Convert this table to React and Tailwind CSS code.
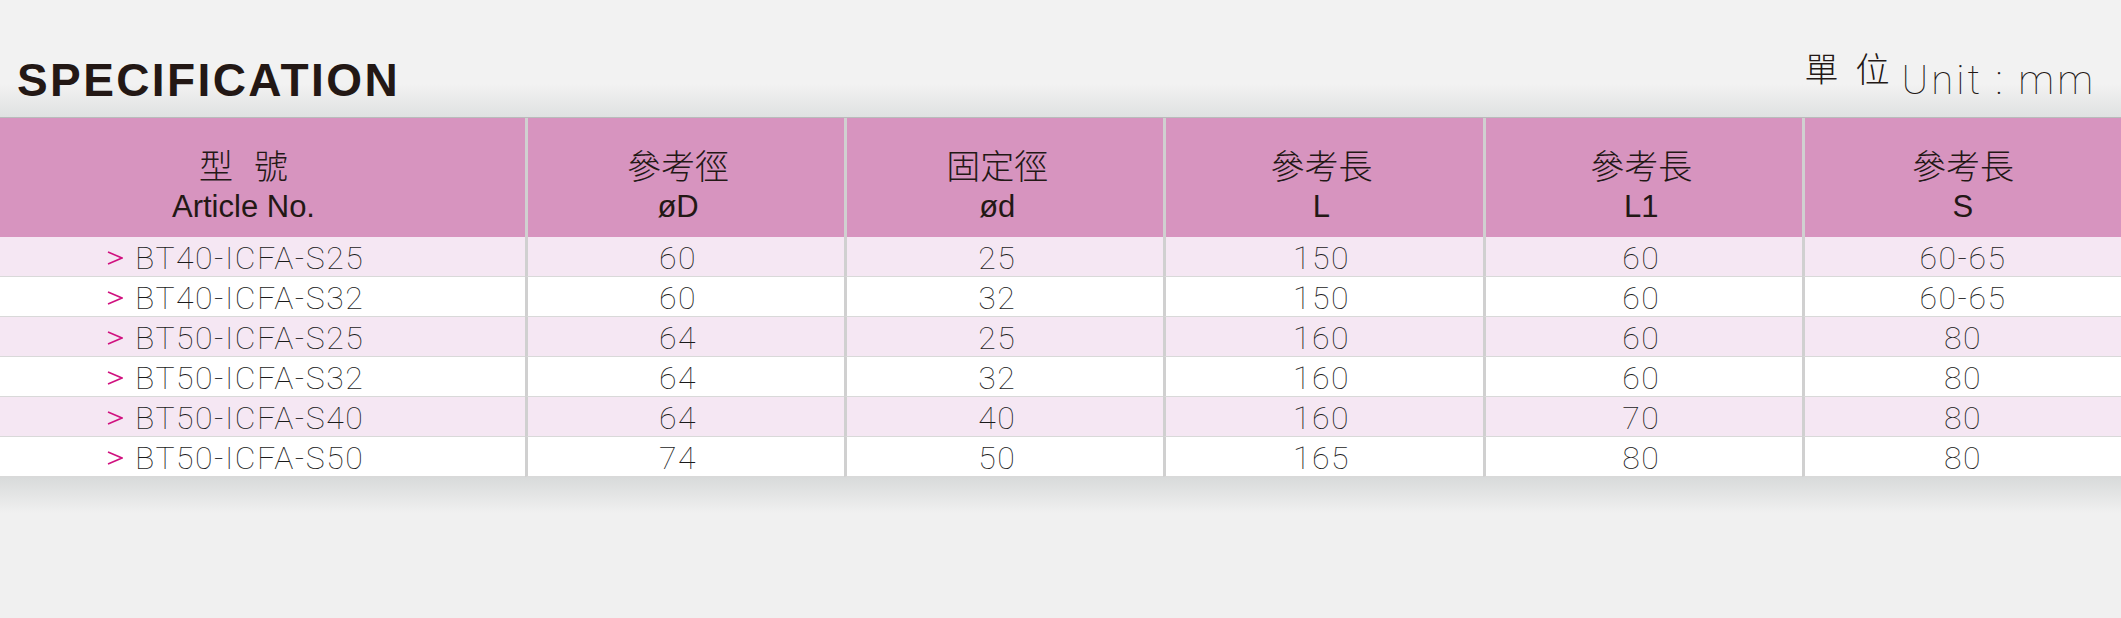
import React from "react";

const rows = [
  ["BT40-ICFA-S25", "60", "25", "150", "60", "60-65"],
  ["BT40-ICFA-S32", "60", "32", "150", "60", "60-65"],
  ["BT50-ICFA-S25", "64", "25", "160", "60", "80"],
  ["BT50-ICFA-S32", "64", "32", "160", "60", "80"],
  ["BT50-ICFA-S40", "64", "40", "160", "70", "80"],
  ["BT50-ICFA-S50", "74", "50", "165", "80", "80"],
];

const heads = [
  ["參考徑", "øD"],
  ["固定徑", "ød"],
  ["參考長", "L"],
  ["參考長", "L1"],
  ["參考長", "S"],
];

// text in the source sits a little left of centre in some columns
const shift = ["", "pr-[16px]", "pr-[16px]", "pr-[6px]", "pr-[5px]", ""];

const cjk = "font-['Noto_Sans_CJK_TC','Noto_Sans_CJK_SC',sans-serif]";
const thin = "font-['Roboto','Liberation_Sans',sans-serif] font-thin";

const Chevron = () => (
  <svg width="16" height="14" viewBox="0 0 16 14" className="mr-[12px] mb-[1px] shrink-0">
    <polyline points="1,1 15,7 1,13" fill="none" stroke="#d0117f" strokeWidth="1.6" />
  </svg>
);

const App = () => {
  return (
    <div className="w-[2121px] h-[618px] bg-[#f0f0f0] overflow-hidden">
      {/* title bar */}
      <div className="h-[118px] flex justify-between items-start bg-[linear-gradient(to_bottom,#f2f2f2_0%,#f2f2f2_72%,#dfe1e1_100%)] border-b border-[#b9bbbb]">
        <h1 className="mt-[57px] ml-[17px] text-[46px] leading-none font-bold tracking-[2.4px] text-[#231815] font-['Liberation_Sans',Arial,sans-serif]">
          SPECIFICATION
        </h1>
        <div className="mt-[51px] mr-[25px] flex items-start text-[#231815]">
          <span className={`${cjk} text-[34px] leading-[34px] font-light flex gap-[17px]`}>
            <span>單</span>
            <span>位</span>
          </span>
          <span className={`${thin} text-[40px] leading-none tracking-[3px] ml-[12px] mt-[10px]`}>Unit : mm</span>
        </div>
      </div>

      {/* table */}
      <div className="grid grid-cols-[525px_repeat(5,1fr)]">
        <div className="h-[119px] bg-[#d794bf] flex flex-col items-center pt-[30px] pr-[38px] text-[#231815]">
          <span className={`${cjk} text-[34px] leading-[34px] font-light flex gap-[21px]`}>
            <span>型</span>
            <span>號</span>
          </span>
          <span className="mt-[10px] font-['Liberation_Sans',Arial,sans-serif] text-[31px] leading-[30px]">Article No.</span>
        </div>
        {heads.map((h, i) => (
          <div
            key={i}
            className={`h-[119px] bg-[#d794bf] border-l-[3px] border-[#d0d0d0] flex flex-col items-center pt-[30px] ${shift[i + 1]} text-[#231815]`}
          >
            <span className={`${cjk} text-[34px] leading-[34px] font-light`}>{h[0]}</span>
            <span className="mt-[10px] font-['Liberation_Sans',Arial,sans-serif] text-[31px] leading-[30px]">{h[1]}</span>
          </div>
        ))}

        {rows.map((r, ri) => {
          const bg = ri % 2 === 0 ? "bg-[#f5e7f3]" : "bg-white";
          return r.map((c, ci) => (
            <div
              key={ri + "-" + ci}
              className={`${bg} h-[40px] border-b border-[#d9d9d9] flex items-center pt-[3px] ${
                ci === 0 ? "pl-[107px]" : `justify-center border-l-[3px] border-l-[#d0d0d0] ${shift[ci]}`
              } ${thin} text-[32px] leading-none tracking-[1.5px] text-[#1a1a1a]`}
            >
              {ci === 0 && <Chevron />}
              {c}
            </div>
          ));
        })}
      </div>

      {/* shadow under table */}
      <div className="h-[36px] bg-[linear-gradient(to_bottom,#d8dada,#f0f0f0)]" />
    </div>
  );
};

export default App;
